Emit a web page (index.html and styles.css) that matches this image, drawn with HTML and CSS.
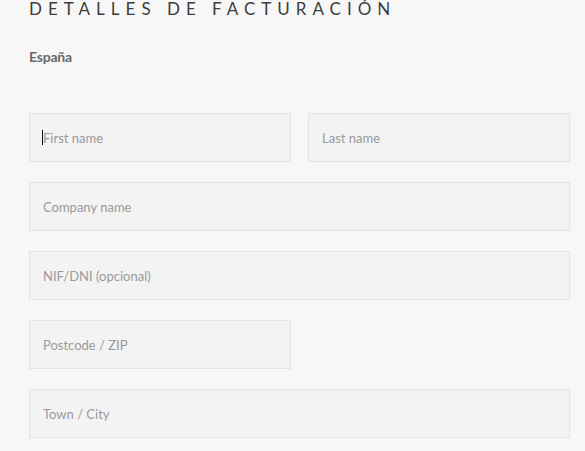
FILE: index.html
```html
<!DOCTYPE html>
<html lang="es">
<head>
<meta charset="utf-8">
<title>Detalles de facturación</title>
<link rel="stylesheet" href="styles.css">
</head>
<body>
<div class="page">
  <h3 class="title">DETALLES DE FACTURACIÓN</h3>
  <p class="country">España</p>
  <form class="form">
    <div class="field field-focus">
      <span class="caret"></span>
      <input class="input" type="text" placeholder="First name">
    </div>
    <div class="field"><input class="input" type="text" placeholder="Last name"></div>
    <div class="field wide"><input class="input" type="text" placeholder="Company name"></div>
    <div class="field wide"><input class="input" type="text" placeholder="NIF/DNI (opcional)"></div>
    <div class="field"><input class="input" type="text" placeholder="Postcode / ZIP"></div>
    <div class="field wide"><input class="input" type="text" placeholder="Town / City"></div>
  </form>
</div>
</body>
</html>
```

FILE: styles.css
```css
html, body {
  margin: 0;
  padding: 0;
  background: #f7f7f7;
}
.page {
  width: 541px;
  padding-left: 29px;
  font-family: Lato, "Open Sans", sans-serif;
}
.title {
  margin: -1px 0 0 0;
  font-family: Lato, sans-serif;
  font-weight: 400;
  font-size: 17px;
  line-height: 20px;
  letter-spacing: 6px;
  color: #3d3d3d;
}
.country {
  margin: 30px 0 0 0;
  font-size: 14px;
  line-height: 16px;
  font-weight: 700;
  color: #686868;
  letter-spacing: -0.2px;
}
.form {
  margin-top: 48px;
  display: grid;
  grid-template-columns: 262px 262px;
  column-gap: 17px;
  row-gap: 20px;
}
.field {
  position: relative;
}
.wide {
  grid-column: 1 / 3;
}
.input {
  display: block;
  box-sizing: border-box;
  width: 100%;
  height: 49px;
  margin: 0;
  padding: 0 0 0 13px;
  border: 1px solid #e3e3e3;
  background: #f3f3f3;
  font-family: Lato, "Open Sans", sans-serif;
  font-size: 13px;
  color: #555;
  outline: none;
}
.input::placeholder {
  color: #9a9a9a;
  opacity: 1;
}
.caret {
  position: absolute;
  left: 13px;
  top: 17px;
  width: 1px;
  height: 15px;
  background: #111;
}
```
